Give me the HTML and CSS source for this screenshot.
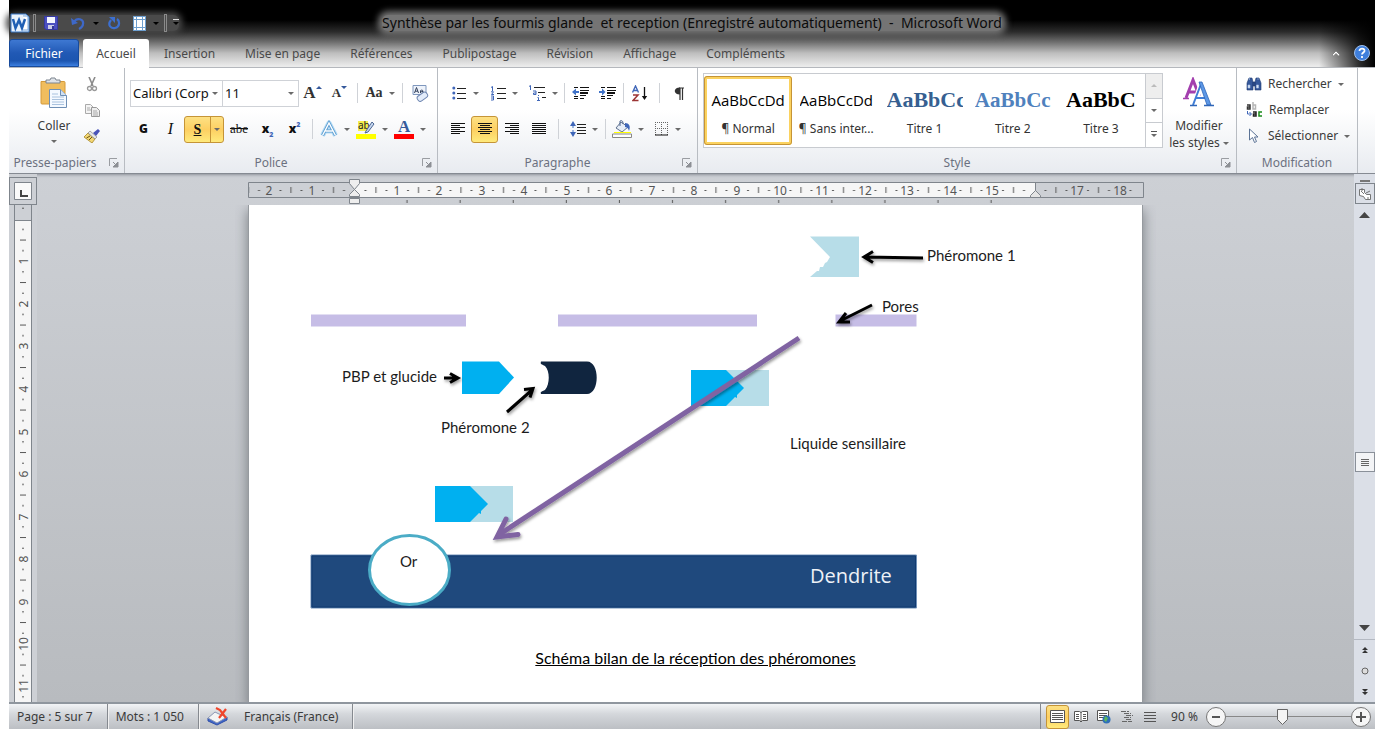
FILE: index.html
```html
<!DOCTYPE html>
<html lang="fr">
<head>
<meta charset="utf-8">
<title>Synthèse par les fourmis - Microsoft Word</title>
<link rel="stylesheet" href="styles.css">
</head>
<body>
<svg class="defs" aria-hidden="true">
  <symbol id="launch" viewBox="0 0 10 10"><path d="M.5 8V.5H8" fill="none" stroke="#9a9da2"/><path d="M9 4v5H4zM4 4l3 3" fill="#8d9095" stroke="#8d9095"/></symbol>
  <symbol id="chunk" viewBox="0 0 80 38"><path d="M34 1h44v36H34l18-18z" fill="#b7dde8"/><path d="M0 1h35l18 18-7 7v3l-2-1-9 9H0z" fill="#00b0f0"/></symbol>
</svg>
<div class="window">
  <header class="top">
    <div class="titlebar">
      <div class="qat">
        <svg width="20" height="20" viewBox="0 0 20 20"><path d="M1 1h15l3 3v15H1z" fill="#eaf3fc" stroke="#3475c4"/><path d="M13 3h5v14h-5" fill="#fff" stroke="#7ca9dc"/><path d="M3 6l2.500 9L9 7l3 8L15 6" fill="none" stroke="#1f5fb4" stroke-width="2.500"/></svg>
        <i class="grip"></i>
        <button aria-label="Enregistrer" class="q-save"><svg width="14" height="14" viewBox="0 0 14 14"><path d="M.5.5h13v13H2l-1.500-1.500z" fill="#4b4fc0" stroke="#3538a0"/><path d="M3 1h8v6H3z" fill="#f3f6ff"/><path d="M4 9h6v4H4z" fill="#c9cbe6"/><path d="M8 10h2v3H8z" fill="#333796"/></svg></button>
        <button aria-label="Annuler" class="q-undo"><svg width="14" height="14" viewBox="0 0 14 14"><path d="M3 6c3-5 10-3 9 2 0 2-2 4-4 5" fill="none" stroke="#3e68c8" stroke-width="2.200"/><path d="M0 2l1 7 6-2z" fill="#3e68c8"/></svg><i class="caret dark"></i></button>
        <button aria-label="Rétablir" class="q-redo"><svg width="13" height="14" viewBox="0 0 13 14"><path d="M3 4c-4 5 0 9 4 8 5-1 5-7 2-9" fill="none" stroke="#3c6fd0" stroke-width="2.200"/><path d="M1 1h6v6z" fill="#3c6fd0"/></svg></button>
        <button aria-label="Tableau" class="q-table"><svg width="13" height="15" viewBox="0 0 13 15"><path d="M0 0h13v15H0z" fill="#fff"/><path d="M.5 0v15M3.500 0v15M9.500 0v15M12.500 0v15M0 .5h13M0 3.500h13M0 11.500h13M0 14.500h13" stroke="#6e9fcf"/></svg><i class="caret dark"></i></button>
        <i class="grip"></i>
        <button aria-label="Personnaliser" class="q-more"><i class="caret dark bar"></i></button>
      </div>
      <h1 class="title">Synthèse par les fourmis glande&nbsp; et reception (Enregistré automatiquement)&nbsp; -&nbsp; Microsoft Word</h1>
    </div>
    <nav class="tabs">
      <button class="tab file">Fichier</button>
      <button class="tab active">Accueil</button>
      <button class="tab">Insertion</button>
      <button class="tab">Mise en page</button>
      <button class="tab">Références</button>
      <button class="tab">Publipostage</button>
      <button class="tab">Révision</button>
      <button class="tab">Affichage</button>
      <button class="tab">Compléments</button>
      <span class="tab-end">
        <button aria-label="Réduire le ruban"><svg width="10" height="8" viewBox="0 0 10 8"><path d="M1 6l4-4 4 4-1.500 1L5 4.500 2.500 7z" fill="#fff" stroke="#777" stroke-width=".8"/></svg></button>
        <button aria-label="Aide"><svg width="16" height="16" viewBox="0 0 16 16"><circle cx="8" cy="8" r="7.500" fill="#3f7fdc" stroke="#9fc0ee"/><path d="M5.500 6c0-3.500 5.500-3 5 0-.3 1.500-2.500 1.500-2.500 3.500M8 11v2" fill="none" stroke="#fff" stroke-width="1.800"/></svg></button>
      </span>
    </nav>
  </header>

  <section class="ribbon">
    <div class="group clip">
      <div class="tools clip-tools">
        <button class="big paste"><svg width="28" height="32" viewBox="0 0 28 32"><path d="M1 4.500h23a1 1 0 0 1 1 1V27H2a1 1 0 0 1-1-1z" fill="#f0bd5e" stroke="#d49a3a"/><path d="M6 6V3h4l1-2h4l1 2h4v3z" fill="#dfe3e8" stroke="#7c858f"/><path d="M9.500 12.500h11l6 6v12h-17z" fill="#f4f9ff" stroke="#6f8fb5"/><path d="M20.500 12.500v6h6" fill="#cfe0f3" stroke="#6f8fb5"/><path d="M12 17h6M12 20h12M12 22.500h12M12 25h12M12 27.500h12" stroke="#a9c2de"/></svg><span>Coller</span><i class="caret"></i></button>
        <div class="clip-col">
          <button aria-label="Couper"><svg width="12" height="15" viewBox="0 0 12 15"><path d="M3 0l4 9M9 0L5 9" stroke="#8b8b8b" stroke-width="1.600"/><circle cx="3.500" cy="11.500" r="2" fill="none" stroke="#999" stroke-width="1.300"/><circle cx="8.500" cy="11.500" r="2" fill="none" stroke="#999" stroke-width="1.300"/></svg></button>
          <button aria-label="Copier"><svg width="15" height="13" viewBox="0 0 15 13"><path d="M.5.500h5l3 3v6h-8z" fill="#f4f4f4" stroke="#aaa"/><path d="M6.500 3.500h5l3 3v6h-8z" fill="#eee" stroke="#999"/><path d="M2 4h3M2 6h4M8 7h4M8 9h5M8 11h5" stroke="#aaa"/></svg></button>
          <button aria-label="Reproduire la mise en forme"><svg width="16" height="14" viewBox="0 0 16 14"><path d="M4 4l7 6-3 4L0 8z" fill="#f3d774" stroke="#a58422" stroke-width=".8"/><path d="M2.500 9L6 7M5 11l3-3" stroke="#6b5410"/><path d="M6 2l7 6-2 2-7-6z" fill="#e6e6e6" stroke="#777" stroke-width=".6"/><path d="M9 4l5-4 2 2-4 5z" fill="#4a54b8"/></svg></button>
        </div>
      </div>
      <footer><span>Presse-papiers</span><button aria-label="Options du presse-papiers"><svg width="10" height="10"><use href="#launch"/></svg></button></footer>
    </div>

    <div class="group font">
      <div class="tools two">
        <div class="row">
          <label class="combo face"><select aria-label="Police"><option>Calibri (Corp</option></select><i class="caret"></i></label>
          <label class="combo size"><select aria-label="Taille"><option>11</option></select><i class="caret"></i></label>
          <button class="b first" aria-label="Agrandir"><span class="ser f18">A</span><i class="tri up"></i></button>
          <button class="b" aria-label="Réduire"><span class="ser f14">A</span><i class="tri"></i></button>
          <i class="sep"></i>
          <button class="split w36"><span class="ser f15">Aa</span><i class="caret"></i></button>
          <i class="sep"></i>
          <button class="b" aria-label="Effacer la mise en forme"><svg width="17" height="17" viewBox="0 0 17 17"><path d="M1 .5h13v9H1z" fill="#eef3fb" stroke="#7f97bd"/><path d="M2.500 8l2-5.500 2 5.500M3.200 6.200h2.600M8.500 5.500V8M8.500 5.800c1-1.200 2.500-.8 2.500.7v1.700M11 6.500c-3-.2-3 1.700-1.500 1.700" fill="none" stroke="#33415c"/><rect x="5" y="9" width="11" height="6" rx="2.500" transform="rotate(-35 10 12)" fill="#e3ecfa" stroke="#6f86b0"/></svg></button>
        </div>
        <div class="row">
          <button class="b bold">G</button>
          <button class="b ital">I</button>
          <button class="split on w40"><span class="und">S</span><i class="caret"></i></button>
          <button class="b strike">abe</button>
          <button class="b bold">x<sub>2</sub></button>
          <button class="b bold">x<sup>2</sup></button>
          <i class="sep"></i>
          <button class="split w36" aria-label="Effets de texte"><svg width="18" height="18" viewBox="0 0 18 18"><path d="M2.500 15.500L9 3l6.500 12.500M5.500 11h7" fill="none" stroke="#b6dcf5" stroke-width="5" stroke-linejoin="round"/><path d="M2.500 15.500L9 3l6.500 12.500M5.500 11h7" fill="none" stroke="#5a9bd0" stroke-width="3"/><path d="M2.500 15.500L9 3l6.500 12.500M5.500 11h7" fill="none" stroke="#fff" stroke-width="1.400"/></svg><i class="caret"></i></button>
          <button class="split w38" aria-label="Surlignage"><svg width="20" height="20" viewBox="0 0 20 20"><path d="M2 2h10v10H2z" fill="#f4ee4e"/><text x="2" y="10" font-size="10" fill="#222" font-family="Noto Sans">ab</text><path d="M10 12l6-9 2 2-6 8-3 1z" fill="#c5d7f0" stroke="#4c6692"/><path d="M0 15h20v5H0z" fill="#ff0"/></svg><i class="caret"></i></button>
          <button class="split w38" aria-label="Couleur de police"><svg width="20" height="20" viewBox="0 0 20 20"><text x="4" y="13" font-size="17" font-weight="700" fill="#365b9b" font-family="Liberation Serif">A</text><path d="M0 15h20v5H0z" fill="red"/></svg><i class="caret"></i></button>
        </div>
      </div>
      <footer><span>Police</span><button aria-label="Options de police"><svg width="10" height="10"><use href="#launch"/></svg></button></footer>
    </div>

    <div class="group para">
      <div class="tools two">
        <div class="row first-row">
          <button class="split w38" aria-label="Puces"><svg width="15" height="14" viewBox="0 0 15 14"><path d="M5 2.500h9M5 7.500h9M5 12.500h9" stroke="#222"/><circle cx="1.800" cy="2" r="1.500" fill="#3f66b8"/><circle cx="1.800" cy="7" r="1.500" fill="#3f66b8"/><circle cx="1.800" cy="12" r="1.500" fill="#3f66b8"/></svg><i class="caret"></i></button>
          <button class="split w40" aria-label="Numérotation"><svg width="15" height="15" viewBox="0 0 15 15"><path d="M6 2.500h9M6 7.500h9M6 12.500h9" stroke="#222"/><path d="M0 1.500l1.500-1V5M0 5.800h2.500l-2 2.700h2.500M0 10h2.500v4H0M0 12h2" fill="none" stroke="#3f66b8"/></svg><i class="caret"></i></button>
          <button class="split w38" aria-label="Liste à plusieurs niveaux"><svg width="17" height="16" viewBox="0 0 17 16"><path d="M5 2.500h11M9 7.500h7M13 12.500h4" stroke="#222"/><path d="M0 1.500l1.500-1V5M4 6h3v3.500H4.500V8H7M9.500 10v1M8.500 12.500h1V16M8 15.500h3" fill="none" stroke="#3f66b8"/></svg><i class="caret"></i></button>
          <i class="sep"></i>
          <button class="b" aria-label="Diminuer le retrait"><svg width="17" height="14" viewBox="0 0 17 14"><path d="M2 1.500h4M8 1.500h9M8 4.500h9M8 9.500h6M2 10.500h4M2 12.500h4M8 12.500h4" stroke="#111"/><path d="M8 7h8" stroke="#111" stroke-width="2"/><path d="M7 6H2" stroke="#3f72c8" stroke-width="2"/><path d="M0 6l4-3.500v7z" fill="#3f72c8"/></svg></button>
          <button class="b" aria-label="Augmenter le retrait"><svg width="17" height="14" viewBox="0 0 17 14"><path d="M2 1.500h4M8 1.500h9M8 4.500h9M8 9.500h6M2 10.500h4M2 12.500h4M8 12.500h4" stroke="#111"/><path d="M8 7h8" stroke="#111" stroke-width="2"/><path d="M0 6h4" stroke="#3f72c8" stroke-width="2"/><path d="M6.500 6L3 2.500v7z" fill="#3f72c8"/></svg></button>
          <i class="sep"></i>
          <button class="b" aria-label="Trier"><svg width="16" height="17" viewBox="0 0 16 17"><path d="M.5 7.500L3.500 1l3 6.500M1.800 5.500h3.400" fill="none" stroke="#3f66b8" stroke-width="1.400"/><path d="M1 10h5l-5 5.500h5.500" fill="none" stroke="#9c3434" stroke-width="1.500"/><path d="M12.500 2v11" stroke="#111" stroke-width="1.300"/><path d="M9.800 11h5.400l-2.700 4z" fill="#111"/></svg></button>
          <i class="sep wide"></i>
          <button class="b" aria-label="Afficher tout"><svg width="11" height="13" viewBox="0 0 11 13"><path d="M5 1h5M6 1v12M8.500 1v12" stroke="#333" stroke-width="1.200"/><path d="M6 .5v7C-1 7.500-1 .5 6 .5" fill="#333"/></svg></button>
        </div>
        <div class="row">
          <button class="b" aria-label="Aligner à gauche"><svg width="14" height="12" viewBox="0 0 14 12"><path d="M0 .5h14M0 2.500h9M0 4.500h14M0 6.500h9M0 8.500h14M0 10.500h9" stroke="#111"/></svg></button>
          <button class="b on" aria-label="Centrer"><svg width="14" height="12" viewBox="0 0 14 12"><path d="M0 .5h14M2 2.500h10M0 4.500h14M2 6.500h10M0 8.500h14M2 10.500h10" stroke="#111"/></svg></button>
          <button class="b" aria-label="Aligner à droite"><svg width="14" height="12" viewBox="0 0 14 12"><path d="M0 .5h14M5 2.500h9M0 4.500h14M5 6.500h9M0 8.500h14M5 10.500h9" stroke="#111"/></svg></button>
          <button class="b" aria-label="Justifier"><svg width="14" height="12" viewBox="0 0 14 12"><path d="M0 .5h14M0 2.500h14M0 4.500h14M0 6.500h14M0 8.500h14M0 10.500h14" stroke="#111"/></svg></button>
          <i class="sep wide"></i>
          <button class="split w38" aria-label="Interligne"><svg width="16" height="16" viewBox="0 0 16 16"><path d="M7 3.500h9M7 6.500h9M7 9.500h9M7 12.500h9" stroke="#222"/><path d="M3 3v10" stroke="#3f72c8" stroke-dasharray="4 2"/><path d="M0 5l3-5 3 5zM0 11l3 5 3-5z" fill="#3f66b8"/></svg><i class="caret"></i></button>
          <i class="sep"></i>
          <button class="split w40" aria-label="Trame de fond"><svg width="20" height="18" viewBox="0 0 20 18"><path d="M9 2l7 5-6 5-6-4z" fill="#e6edf7" stroke="#60728f"/><path d="M8 6V1c2-1 3 0 3 3" fill="none" stroke="#4a628c"/><path d="M13 3c4 0 6 3 4 8-1-3-2-4-4-4z" fill="#3f66b8"/><path d="M2 12.500h17" stroke="#ff0"/><path d="M.5 14h19v3.500H.5z" fill="#fff" stroke="#888"/></svg><i class="caret"></i></button>
          <button class="split w40" aria-label="Bordures"><svg width="14" height="14" viewBox="0 0 14 14"><path d="M.5 0v13M6.500 0v13M12.500 0v13M0 .5h13M0 6.500h13" fill="none" stroke="#666" stroke-dasharray="1 1"/><path d="M0 13h13" stroke="#111"/></svg><i class="caret"></i></button>
        </div>
      </div>
      <footer><span>Paragraphe</span><button aria-label="Options de paragraphe"><svg width="10" height="10"><use href="#launch"/></svg></button></footer>
    </div>

    <div class="group style">
      <div class="tools style-tools">
        <div class="gallery">
          <button class="sample chosen"><span class="prev">AaBbCcDd</span><span>¶ Normal</span></button>
          <button class="sample"><span class="prev">AaBbCcDd</span><span>¶ Sans inter...</span></button>
          <button class="sample"><span class="prev serif navy">AaBbCc</span><span>Titre 1</span></button>
          <button class="sample"><span class="prev serif blue">AaBbCc</span><span>Titre 2</span></button>
          <button class="sample"><span class="prev serif">AaBbC</span><span>Titre 3</span></button>
          <div class="spin"><button aria-label="Précédent" disabled><i class="caret upw"></i></button><button aria-label="Suivant"><i class="caret"></i></button><button aria-label="Plus"><i class="caret bar"></i></button></div>
        </div>
        <button class="big modify"><svg width="32" height="32" viewBox="0 0 32 32"><path d="M3 21L10 3l7 18M5 15h9" fill="none" stroke="#a33fae" stroke-width="3"/><path d="M0 21.500h6M13 21.500h6" stroke="#a33fae" stroke-width="1.500"/><path d="M11 28L18 7l8 21M13 21h10" fill="none" stroke="#fff" stroke-width="5"/><path d="M10 28L18 7M13 21h10" fill="none" stroke="#3f7dd6" stroke-width="2"/><path d="M16 5h3l9 23h-4z" fill="#5c97e6" stroke="#2f66b8" stroke-width=".8"/><path d="M7 28.500h7M21 28.500h10" stroke="#2f66b8" stroke-width="1.600"/></svg><span>Modifier</span><span>les styles <i class="caret"></i></span></button>
      </div>
      <footer><span>Style</span><button aria-label="Options de style"><svg width="10" height="10"><use href="#launch"/></svg></button></footer>
    </div>

    <div class="group edit">
      <div class="tools edit-tools">
        <button><svg width="16" height="14" viewBox="0 0 16 14"><path d="M3 1h3l1 4v8H1V6zM10 1h3l2 5v7H9V5zM7 5h2v4H7z" fill="#35589b" stroke="#1f3a70" stroke-width=".6"/><path d="M2 8h2v3H2zM10.500 8h2v3h-2zM3.500 0v3M12 0v3" fill="#dbe6f7" stroke="#a9bfe2" stroke-width=".6"/></svg><span>Rechercher</span><i class="caret"></i></button>
        <button><svg width="17" height="17" viewBox="0 0 17 17"><g fill="none" stroke-width="1.500"><path d="M1 3h3v4H1.500V5H4" stroke="#333"/><path d="M7 0v7h2.500V3H7" stroke="#b5b5b5"/><path d="M7 10h3v4H7.500v-2H10" stroke="#222"/><path d="M16 10h-3v4h3" stroke="#178a17"/></g><path d="M1.500 9v3H5M3.500 10l2 2-2 2" fill="none" stroke="#3f66b8"/></svg><span>Remplacer</span></button>
        <button><svg width="16" height="16" viewBox="0 0 16 16"><path d="M3.500 1v11l3-2.500 2 5 2-1-2-4.500h3.500z" fill="#fff" stroke="#5c7396"/></svg><span>Sélectionner</span><i class="caret"></i></button>
      </div>
      <footer><span>Modification</span></footer>
    </div>
    <div class="group rest"></div>
  </section>

  <main class="work">
    <div class="left">
      <button class="tabstop" aria-label="Taquet"><svg width="18" height="18" viewBox="0 0 18 18"><path d="M.5.500h17v17H.5z" fill="#fafafa" stroke="#7f858c"/><path d="M7 8v6h7" fill="none" stroke="#444" stroke-width="2"/></svg></button>
      <div class="vruler"><svg width="16" height="497" viewBox="15 205 16 497">
        <defs><pattern id="vt" patternUnits="userSpaceOnUse" x="15" y="218.800" width="16" height="42.500"><path d="M7 10.700h2M5 21.200h6M7 31.800h2" stroke="#555"/></pattern></defs>
        <path d="M15 220h16v482H15z" fill="#f6f6f6"/><path d="M15 220.500h16" stroke="#7f858c"/><path d="M15 205h16v497H15z" fill="url(#vt)"/>
        <g class="num" transform="rotate(-90)"><text x="-261" y="28">1</text><text x="-304" y="28">2</text><text x="-346" y="28">3</text><text x="-389" y="28">4</text><text x="-432" y="28">5</text><text x="-474" y="28">6</text><text x="-517" y="28">7</text><text x="-559" y="28">8</text><text x="-602" y="28">9</text><text x="-644" y="28">10</text><text x="-686" y="28">11</text></g>
      </svg></div>
    </div>
    <div class="center">
      <div class="hruler"><svg width="896" height="24" viewBox="248 181 896 24">
        <defs><pattern id="ht" patternUnits="userSpaceOnUse" x="354.500" y="182" width="42.500" height="16"><path d="M10 8.500h2M31 8.500h2M21.500 5v6" stroke="#555"/></pattern>
        <pattern id="hs" patternUnits="userSpaceOnUse" x="354.500" y="200" width="53.100" height="4"><path d="M52.500 0v3" stroke="#555"/></pattern></defs>
        <path d="M248.500 182.500h895v15h-895z" fill="#cdd0d5" stroke="#7f858c"/><path d="M354 183h681v14H354z" fill="#f6f6f6"/><path d="M249 183h887v14H249z" fill="url(#ht)"/><path d="M355 200h640v4H355z" fill="url(#hs)"/>
        <path d="M349.500 179.500h10v4l-5 6 5 5v2h-10v-2l5-5-5-6z" fill="#eee" stroke="#7f858c"/><path d="M349.500 198.500h10v5h-10z" fill="#eee" stroke="#7f858c"/><path d="M1030.500 197.500v-2l5-5 5 5v2z" fill="#e4e4e4" stroke="#7f858c"/><path d="M1035.500 183v8" stroke="#7f858c"/>
        <g class="num"><text x="269" y="195">2</text><text x="312" y="195">1</text><text x="397" y="195">1</text><text x="439" y="195">2</text><text x="482" y="195">3</text><text x="524" y="195">4</text><text x="567" y="195">5</text><text x="609" y="195">6</text><text x="652" y="195">7</text><text x="694" y="195">8</text><text x="737" y="195">9</text><text x="780" y="195">10</text><text x="822" y="195">11</text><text x="865" y="195">12</text><text x="907" y="195">13</text><text x="950" y="195">14</text><text x="992" y="195">15</text><text x="1077" y="195">17</text><text x="1120" y="195">18</text></g>
      </svg></div>
      <article class="page">
        <figure>
          <svg width="893" height="441" viewBox="249 205 893 441" role="img" aria-label="Schéma de la réception des phéromones">
            <defs><filter id="sh" x="-20%" y="-50%" width="140%" height="200%"><feDropShadow dx="1" dy="2" stdDeviation="1.500" flood-opacity=".4"/></filter></defs>
            <path d="M810 236.500h49v40.500h-49l7-6h2l1-4h3l2-4 2-1 3-5z" fill="#b7dde8"/>
            <path d="M311 314.500h155v12H311zM558 314.500h199v12H558zM835.500 314.500h81v12h-81z" fill="#c6bde6"/>
            <path d="M462 361.500h37l15 16-15 16.500h-37z" fill="#00b0f0"/>
            <path d="M541 361.500h46c13 0 13 32.500 0 32.500h-46c-1-3 1-2 4-4 5-6 5-19 0-24-3-2-5-1-4-4.500z" fill="#10253f"/>
            <use href="#chunk" x="691" y="369" width="80" height="38"/><use href="#chunk" x="435" y="485" width="80" height="38"/>
            <path d="M311 555h605.500v53H311z" fill="#1f497d" stroke="#7191b8"/><path d="M312 556h603.500v51H312z" fill="none" stroke="#103a70"/>
            <ellipse cx="409.500" cy="570" rx="40" ry="34.500" fill="#fff" stroke="#4bacc6" stroke-width="3"/>
            <g fill="none" stroke="#8064a2" stroke-width="5" filter="url(#sh)"><path d="M799 338L500 534"/><path d="M506 519l-9 18 21-2.500" stroke-linecap="round"/></g>
            <g fill="none" stroke="#000" stroke-width="3" filter="url(#sh)"><path d="M923 258l-58-1M873 251.500l-9 5.500 9 5.500M872 305l-32 16M846 313l-7 9h11M444 378h12M450 373.500l8 4.500-8 4.500M507 412l25-22M524 389.500l9-1-3 9"/></g>
            <g class="lbl"><text x="927" y="261">Phéromone 1</text><text x="882" y="312">Pores</text><text x="342" y="382">PBP et glucide</text><text x="441" y="433">Phéromone 2</text><text x="790" y="449">Liquide sensillaire</text><text x="400" y="567">Or</text></g>
            <text class="dend" x="810" y="583">Dendrite</text>
          </svg>
          <figcaption>Schéma bilan de la réception des phéromones</figcaption>
        </figure>
      </article>
    </div>
    <div class="scroll">
      <i class="dash"></i>
      <button class="rulerbtn" aria-label="Règle"><svg width="12" height="12" viewBox="0 0 12 12"><path d="M.5 1.500h5v3l2 2h4v5h-5l-2-3-4-1zM3 0v3M9 9v2M2 3l3 3M7 5l4-2" fill="#fff" stroke="#666" stroke-width=".9"/></svg></button>
      <button class="arrow" aria-label="Haut"><svg width="11" height="6"><path d="M0 6l5.500-6L11 6z" fill="#444"/></svg></button>
      <div class="track"><span class="before"></span><span class="thumb"><i></i></span><span class="after"></span></div>
      <button class="arrow" aria-label="Bas"><svg width="11" height="6"><path d="M0 0l5.500 6L11 0z" fill="#444"/></svg></button>
      <button class="nav line" aria-label="Page précédente"><svg width="6" height="7"><path d="M0 3l3-3 3 3zM0 6l3-3 3 3z" fill="#333"/></svg></button>
      <button class="nav" aria-label="Objet"><svg width="8" height="8"><circle cx="4" cy="4" r="3" fill="#ddd" stroke="#666"/></svg></button>
      <button class="nav" aria-label="Page suivante"><svg width="6" height="7"><path d="M0 1l3 3 3-3zM0 4l3 3 3-3z" fill="#333"/></svg></button>
    </div>
  </main>

  <footer class="status">
    <button class="cell">Page : 5 sur 7</button>
    <button class="cell">Mots : 1 050</button>
    <button class="cell lang"><svg width="21" height="19" viewBox="0 0 21 19"><path d="M1 11v3l9 4 10-5v-3" fill="#3f66c8" stroke="#2f4fa8"/><path d="M1 11l7-6 4 2 8 3-10 6z" fill="#f4f4f4" stroke="#8b96b4"/><path d="M9 1l4 2 6 8M19 2l-7 9" fill="none" stroke="#f0452b" stroke-width="2.200"/></svg><span>Français (France)</span></button>
    <div class="views">
      <button class="v on" aria-label="Page"><svg width="15" height="13" viewBox="0 0 15 13"><path d="M.5.500h14v12H.5z" fill="#fff" stroke="#555"/><path d="M2 3.500h11M2 5.500h11M2 7.500h11M2 9.500h11" stroke="#555"/></svg></button>
      <button class="v" aria-label="Lecture"><svg width="14" height="13" viewBox="0 0 14 13"><path d="M.5 1.500h5l1.500 1 1.500-1h5v9h-5L7 12l-1.500-1.500h-5zM7 2v10" fill="#fff" stroke="#555"/><path d="M2 4.500h3M2 6.500h3M2 8.500h3M9 4.500h3M9 6.500h3M9 8.500h3" stroke="#555"/></svg></button>
      <button class="v" aria-label="Web"><svg width="14" height="14" viewBox="0 0 14 14"><path d="M.5.500h11v10H.5z" fill="#fff" stroke="#555"/><path d="M2 3.500h8M2 5.500h8M2 7.500h5" stroke="#555"/><circle cx="9.500" cy="9.500" r="4" fill="#2f6fb8"/><path d="M8 6l3 2-2 4-2-2z" fill="#5db85a"/></svg></button>
      <button class="v" aria-label="Plan"><svg width="12" height="12" viewBox="0 0 12 12"><path d="M0 .5h8M3 2.500h7M5 4.500h7M3 6.500h7M5 8.500h6M1 10.500h10" stroke="#666" stroke-dasharray="5 1"/></svg></button>
      <button class="v" aria-label="Brouillon"><svg width="12" height="12" viewBox="0 0 12 12"><path d="M0 1.500h12M0 4.500h12M0 7.500h12M0 10.500h12" stroke="#555"/></svg></button>
      <button class="pct">90 %</button>
      <button class="zoom" aria-label="Zoom arrière"><svg width="20" height="20" viewBox="0 0 20 20"><circle cx="10" cy="10" r="9.500" fill="#f6f6f6" stroke="#777"/><path d="M6 10h8" stroke="#555" stroke-width="2"/></svg></button>
      <input type="range" min="0" max="100" value="45" aria-label="Zoom">
      <button class="zoom" aria-label="Zoom avant"><svg width="20" height="20" viewBox="0 0 20 20"><circle cx="10" cy="10" r="9.500" fill="#f6f6f6" stroke="#777"/><path d="M5 10h10M10 5v10" stroke="#555" stroke-width="2"/></svg></button>
    </div>
  </footer>
</div>
</body>
</html>
```
FILE: styles.css
```css
* { box-sizing: border-box; }
body { margin: 0; background: #fff; font: 12px/16px "Noto Sans", sans-serif; color: #3b3b3b; }
button { font: inherit; color: inherit; background: none; border: 0; padding: 0; margin: 0; display: flex; align-items: center; justify-content: center; white-space: nowrap; }
svg { display: block; flex: none; }
.defs { position: absolute; width: 0; height: 0; }
.window { height: 100vh; padding: 0 9px 9px; display: flex; flex-direction: column; overflow: hidden; }

.top { background: linear-gradient(to left, #000 0, rgba(0,0,0,.8) 16px, transparent 56px), linear-gradient(#000 0, #000 20px, #2c2c2c 32px, #6e6e6e 42px, #bdbdbd 53px, #ebebeb 66px); }
.titlebar { height: 39px; display: grid; grid-template-columns: 1fr auto 1fr; align-items: center; padding-top: 7px; }
.qat { display: flex; align-items: center; justify-self: start; background: #4a4a4a; border-radius: 6px; box-shadow: 0 0 6px 3px #4a4a4a; height: 16px; padding-left: 1px; }
.grip { width: 3px; height: 18px; border: 1px solid #8a8a8a; margin-left: 3px; }
.q-save { margin-left: 8px; }
.q-undo { margin-left: 13px; gap: 8px; }
.q-redo { margin-left: 9px; }
.q-table { margin-left: 12px; gap: 7px; }
.q-more { margin-left: 6px; }
.q-table + .grip { margin-left: 5px; }
.title { margin: 0; font-size: 14px; line-height: 16px; font-weight: 400; color: #0b0b0b; background: #747474; border-radius: 6px; box-shadow: 0 0 6px 4px #747474; }
.caret { width: 0; height: 0; border: 3px solid transparent; border-top-color: #6a6a6a; border-bottom: 0; flex: none; display: inline-block; vertical-align: middle; }
.caret.dark { border-top-color: #000; }
.caret.upw { border-top: 0; border-bottom: 3px solid #bbb; }
.caret.bar { position: relative; }
.caret.bar::before { content: ""; position: absolute; left: -3px; top: -6px; width: 6px; height: 1px; background: #555; }
.q-more .caret.bar::before { background: #ddd; }

.tabs { height: 29px; display: flex; border-bottom: 1px solid #b5b8bd; }
.tab { padding: 1px 15px 0; color: #494949; }
.tab.file { width: 70px; background: linear-gradient(#3e78d2, #2159b5 50%, #1c55b0 80%, #3c7fe0); border: 1px solid #174a9c; border-radius: 3px 3px 0 0; color: #fff; margin-right: 4px; }
.tab.active { width: 66px; background: #fff; border-radius: 3px 3px 0 0; padding: 0; margin-bottom: -1px; }
.tab-end { margin-left: auto; display: flex; gap: 13px; padding-right: 5px; align-items: center; }

.ribbon { height: 106px; display: flex; background: linear-gradient(#fff 0, #fff 40%, #e8ebf0); border-bottom: 1px solid #858a92; flex: none; }
.group { display: flex; flex-direction: column; border-right: 1px solid #b8bcc2; flex: none; }
.tools { flex: 1; display: flex; }
.group footer { height: 20px; display: flex; align-items: center; justify-content: center; color: #6b7180; padding: 0 5px 0 5px; }
.group footer span { flex: 1; text-align: center; padding-right: 10px; }
.edit footer span { padding: 0; }
.clip { width: 116px; }
.font { width: 313px; }
.para { width: 260px; }
.style { flex: 1; }
.edit { width: 121px; }
.rest { width: 17px; border: 0; }
.clip footer { padding-left: 0; }
.clip footer span { padding-right: 8px; }
.big { flex-direction: column; }
.clip-tools { padding-top: 9px; }
.paste { width: 60px; margin-left: 15px; justify-content: flex-start; }
.paste span { margin: 9px 0 6px; }
.clip-col { display: flex; flex-direction: column; gap: 12px; width: 16px; align-items: center; }
.two { flex-direction: column; padding-left: 5px; padding-top: 11px; gap: 8px; }
.row { display: flex; align-items: center; height: 28px; }
.para .two { padding-left: 6px; }
.first-row { padding-left: 2px; }
.b { width: 27px; height: 27px; position: relative; color: #111; flex: none; }
.split { height: 27px; gap: 6px; color: #111; flex: none; }
.w36 { width: 36px; }
.w38 { width: 38px; }
.w40 { width: 40px; }
.on { background: linear-gradient(#fde184, #fdcf62 50%, #ffea7c); border: 1px solid #c59437; border-radius: 3px; }
.split.on { gap: 0; }
.split.on span { flex: 1; height: 25px; line-height: 25px; border-right: 1px solid #c59437; }
.split.on .caret { margin: 0 3px; }
.sep { width: 1px; height: 20px; background: #cfd2d7; margin: 0 4px; flex: none; }
.para .sep { margin: 0 2px; }
.para .sep.wide { margin: 0 6px; }
.combo { height: 27px; display: flex; position: relative; border: 1px solid #cfd2d7; background: #fff; }
.combo.face { width: 93px; }
.combo.size { width: 76px; border-left: 0; }
.combo select { appearance: none; border: 0; background: none; width: 100%; font: 13px "Noto Sans", sans-serif; padding: 0 2px; color: #111; }
.combo .caret { position: absolute; right: 4px; top: 11px; }
.ser { font-family: "Liberation Serif", serif; font-weight: 700; color: #333; }
.f18 { font-size: 17px; }
.f14 { font-size: 13px; }
.f15 { font-size: 14px; }
.tri { border: 3px solid transparent; border-top: 3px solid #35589b; border-bottom: 0; margin-bottom: 12px; }
.tri.up { border-top: 0; border-bottom: 3px solid #35589b; }
.bold { font-weight: 900; font-size: 12px; }
.bold sub, .bold sup { font-size: 7px; line-height: 7px; color: #3f66b8; }
.bold sub { align-self: flex-end; margin-bottom: 5px; }
.bold sup { align-self: flex-start; margin-top: 5px; }
.ital { font: italic 16px "Liberation Serif", serif; }
.und { text-decoration: underline; font-weight: 700; font-family: "Liberation Serif", serif; font-size: 14px; }
.strike { width: 30px; font: 13px "Liberation Serif", serif; text-decoration: line-through; }

.style-tools { padding: 5px 5px 0; gap: 4px; }
.gallery { flex: 1; height: 75px; display: flex; border: 1px solid #c8cbd0; background: #fff; }
.sample { flex: 1 1 0; min-width: 0; flex-direction: column; gap: 11px; margin: 2px 0; border: 3px solid transparent; padding-top: 11px; overflow: hidden; justify-content: flex-start; color: #333; }
.sample.chosen { border: 3px solid #fbd25f; outline: 1px solid #c59437; outline-offset: -1px; border-radius: 3px; }
.prev { font: 15px/20px "Open Sans", sans-serif; color: #000; height: 20px; max-width: 76px; overflow: hidden; flex: none; }
.prev.serif { font: 700 22px/20px "Liberation Serif", serif; }
.prev.navy { color: #365f91; }
.prev.blue { color: #4f81bd; font-size: 21px; }
.spin { width: 17px; display: flex; flex-direction: column; border-left: 1px solid #c8cbd0; flex: none; }
.spin button { flex: 1; border-bottom: 1px solid #c8cbd0; }
.spin button:first-child { background: #eee; }
.spin button:last-child { border: 0; }
.modify { width: 64px; justify-content: flex-start; line-height: 17px; }
.modify svg { margin: 4px 0 8px; }
.edit-tools { flex-direction: column; gap: 10px; padding: 8px 0 0 9px; align-items: flex-start; }
.edit-tools button { height: 16px; gap: 6px; }

.work { flex: 1; min-height: 0; display: flex; background: linear-gradient(#cdd0d5, #b8bbbf); box-shadow: inset 0 3px 3px -2px #8d929a; }
.left { width: 28px; padding-top: 3px; display: flex; flex-direction: column; background: #cdd0d5; overflow: hidden; flex: none; }
.tabstop { width: 28px; height: 28px; border: 1px solid #7f858c; flex: none; }
.vruler { margin: 0 0 0 5px; width: 18px; flex: 1; border: solid #7f858c; border-width: 0 1px; background: #cdd0d5; overflow: hidden; }
.num { font: 12px "Noto Sans", sans-serif; fill: #555; text-anchor: middle; }
.center { flex: 1; min-width: 0; display: flex; flex-direction: column; align-items: center; overflow: hidden; }
.hruler { height: 31px; padding-top: 7px; flex: none; }
.hruler svg { overflow: visible; }
.page { width: 893px; flex: 1; background: #fff; border: 0; box-shadow: 0 0 0 1px #969a9f, 0 6px 12px 1px #777b80; overflow: hidden; clip-path: inset(0 -14px); }
figure { margin: 0; }
.lbl { font: 15px Lato, sans-serif; fill: #1c1c1c; }
.dend { font: 20px "Open Sans", sans-serif; fill: #eef2f7; }
figcaption { text-align: center; font: 16px/24px Lato, sans-serif; color: #000; text-decoration: underline; }

.scroll { width: 21px; display: flex; flex-direction: column; align-items: center; padding-top: 6px; background: #dbdfe7; flex: none; }
.dash { width: 10px; height: 2px; background: #777; flex: none; }
.rulerbtn { width: 20px; height: 21px; border: 1px solid #7f858c; margin-top: 1px; flex: none; }
.arrow { height: 22px; width: 20px; flex: none; }
.track { flex: 1; display: flex; flex-direction: column; width: 20px; }
.before { flex: 61; }
.after { flex: 39; }
.thumb { height: 20px; border: 1px solid #8a9099; background: #f3f4f6; padding: 6px 5px; flex: none; }
.thumb i { display: block; height: 7px; background: repeating-linear-gradient(#666 0, #666 1px, transparent 1px, transparent 2px); }
.nav { height: 21px; width: 21px; flex: none; }
.nav.line { border-top: 1px solid #b4b9c2; }

.status { height: 27px; flex: none; border-top: 2px solid #8f969e; background: linear-gradient(#f2f4f6, #d4d7db 40%, #bcbfc4); display: flex; }
.cell { padding: 0 14px 0 8px; border-right: 1px solid #85898f; box-shadow: 1px 0 0 #f0f0f0; }
.lang { gap: 16px; }
.views { margin-left: auto; display: flex; align-items: center; border-left: 1px solid #85898f; padding: 0 4px 0 5px; }
.v { width: 23px; height: 24px; }
.pct { width: 45px; padding-left: 2px; }
input[type=range] { appearance: none; width: 125px; height: 20px; margin: 0; background: linear-gradient(#888, #888) center / 100% 1px no-repeat; }
input[type=range]::-webkit-slider-thumb { appearance: none; width: 11px; height: 16px; background: url("data:image/svg+xml,%3Csvg xmlns='http://www.w3.org/2000/svg' width='11' height='16'%3E%3Cpath d='M.5.5h10v10l-5 5-5-5z' fill='%23f4f4f4' stroke='%23666'/%3E%3C/svg%3E") no-repeat; }
```
